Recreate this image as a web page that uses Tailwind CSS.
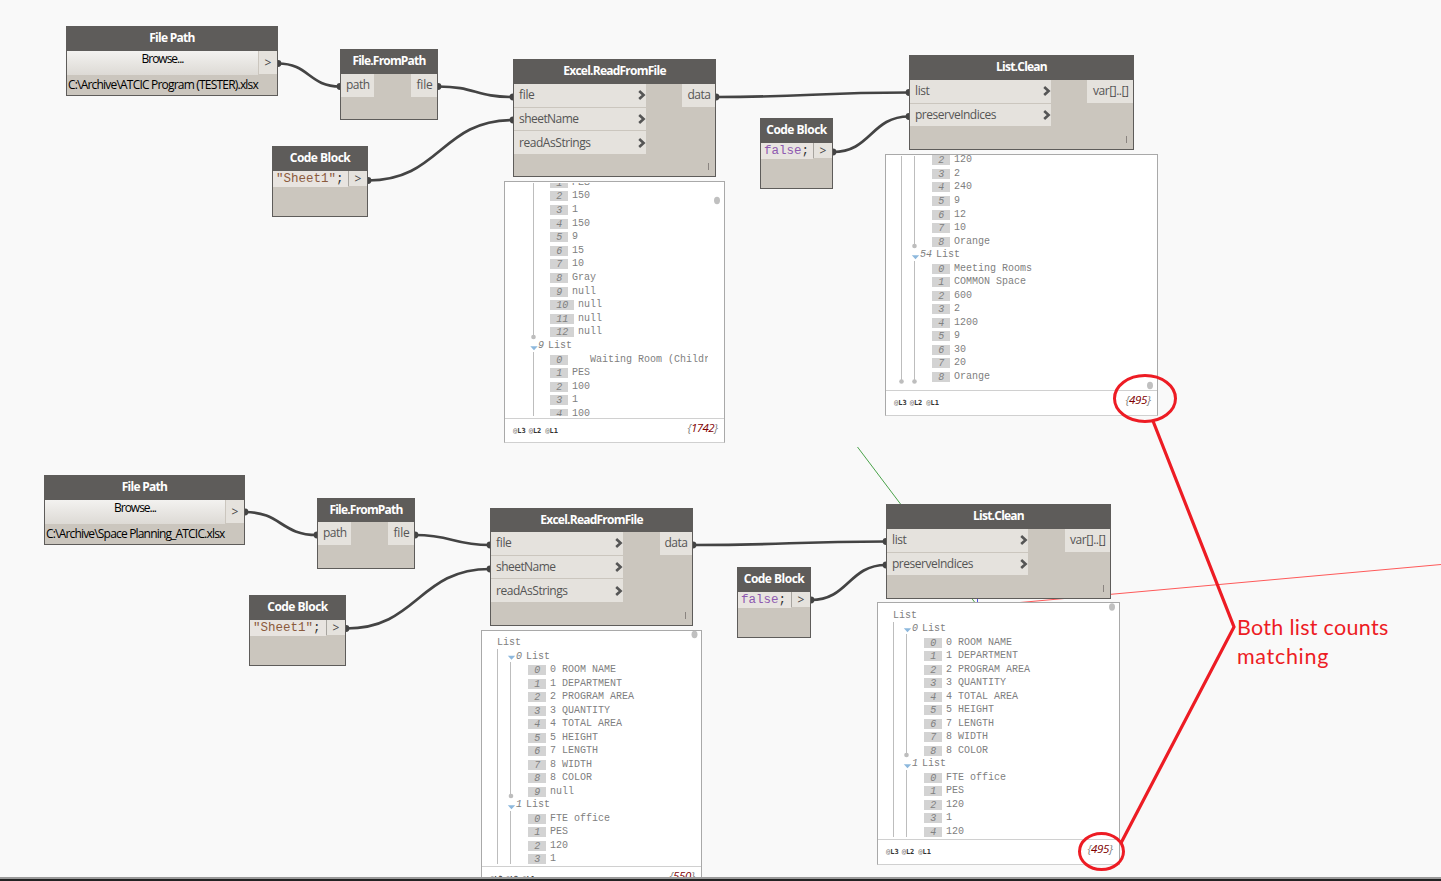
<!DOCTYPE html>
<html lang="en">
<head>
  <meta charset="UTF-8">
  <meta name="viewport" content="width=device-width, initial-scale=1.0">
  <title>Graph Workspace</title>
  <script src="https://cdn.jsdelivr.net/npm/@tailwindcss/browser@4"></script>
</head>
<body class="bg-[#f9f9f9] overflow-hidden font-['Open_Sans',sans-serif]">
  <main id="canvas" class="relative w-[1441px] h-[881px] overflow-hidden">
    <!-- Axes and wires, under the nodes -->
    <svg class="absolute inset-0" width="1441" height="881" fill="none">
      <path d="M857.5 447L974.5 602" stroke="#4aa34a" stroke-width="1" />
      <path d="M977.5 598V602" stroke="#5050e0" stroke-width="1" />
      <path d="M1020 602.5L1441 564.5" stroke="#ff5a5a" stroke-width="1" />
      <g id="wires" stroke="#444444" stroke-width="2.7"></g>
    </svg>

    <div id="nodes"></div>
    <div id="panels"></div>

    <!-- Red markup -->
    <svg class="absolute inset-0" width="1441" height="881" fill="none" stroke="#ed1c24" stroke-width="3">
      <ellipse cx="1145" cy="398.5" rx="30.5" ry="23" />
      <ellipse cx="1101.5" cy="851.5" rx="22" ry="18" />
      <path d="M1153 421L1234 627L1121 843" stroke-width="3.2" />
    </svg>
    <div class="absolute left-[1237px] top-[613px] font-[Lato,sans-serif] text-[21.5px] leading-[29px] text-[#ed1c24]">
      <div><span data-fit="151.5">Both list counts</span></div>
      <div><span data-fit="92">matching</span></div>
    </div>

    <div class="absolute inset-x-0 bottom-0 h-1 bg-[#222222] border-t-2 border-[#9a9a9a]"></div>
  </main>

  <script>
    // [x1, y1, x2, y2]
    const wires = [
      [278, 63.5, 340, 86.5], [438, 86.5, 513, 97], [368, 180.5, 513, 120],
      [716, 97, 909, 92.5], [833, 152, 909, 116.5],
      [245, 512, 317, 535], [415, 535, 490, 545], [346, 628.5, 490, 569],
      [693, 545, 886, 541.5], [811, 600, 886, 565],
    ];

    // Labels are [text, width]
    const readPorts = [["file", 15.5], ["sheetName", 59.5], ["readAsStrings", 71.5]];
    const cleanPorts = [["list", 14.5], ["preserveIndices", 81]];
    const nodes = [
      { type: "path", x: 66, y: 26, w: 212, h: 70, head: 25, title: ["File Path", 45.5], file: ["C:\\Archive\\ATCIC Program (TESTER).xlsx", 190] },
      { type: "ports", x: 340, y: 49, w: 98, h: 71, head: 25, title: ["File.FromPath", 73], ins: [["path", 23.5]], inW: 34, out: ["file", 16], outW: 26 },
      { type: "code", x: 272, y: 146, w: 96, h: 71, head: 25, title: ["Code Block", 60.5], code: '<span class="text-[#8b5a3c]">"Sheet1"</span>;' },
      { type: "ports", x: 513, y: 59, w: 203, h: 118, head: 25, title: ["Excel.ReadFromFile", 102.5], ins: readPorts, inW: 133, out: ["data", 23], outW: 33, arrows: true },
      { type: "code", x: 760, y: 118, w: 73, h: 71, head: 25, title: ["Code Block", 60.5], code: '<span class="text-[#8e5ab0]">false</span>;' },
      { type: "ports", x: 909, y: 55, w: 225, h: 95, head: 25, title: ["List.Clean", 51], ins: cleanPorts, inW: 142, out: ["var[]..[]", 35.5], outW: 46, arrows: true },
      { type: "path", x: 44, y: 475, w: 201, h: 70, head: 25, title: ["File Path", 45.5], file: ["C:\\Archive\\Space Planning_ATCIC.xlsx", 178.5] },
      { type: "ports", x: 317, y: 498, w: 98, h: 71, head: 24, title: ["File.FromPath", 73], ins: [["path", 23.5]], inW: 34, out: ["file", 16], outW: 26 },
      { type: "code", x: 249, y: 595, w: 97, h: 71, head: 25, title: ["Code Block", 60.5], code: '<span class="text-[#8b5a3c]">"Sheet1"</span>;' },
      { type: "ports", x: 490, y: 508, w: 203, h: 118, head: 24, title: ["Excel.ReadFromFile", 102.5], ins: readPorts, inW: 133, out: ["data", 23], outW: 32, arrows: true },
      { type: "code", x: 737, y: 567, w: 74, h: 71, head: 25, title: ["Code Block", 60.5], code: '<span class="text-[#8e5ab0]">false</span>;' },
      { type: "ports", x: 886, y: 504, w: 225, h: 95, head: 25, title: ["List.Clean", 51], ins: cleanPorts, inW: 142, out: ["var[]..[]", 35.5], outW: 45, arrows: true },
    ];

    // Rows: "index|value" is an item, "index>" a nested list, ">" the root list
    const header = ["0|0 ROOM NAME", "1|1 DEPARTMENT", "2|2 PROGRAM AREA", "3|3 QUANTITY", "4|4 TOTAL AREA", "5|5 HEIGHT", "6|7 LENGTH", "7|8 WIDTH", "8|8 COLOR"];
    const panels = [
      { x: 504, y: 181, w: 221, h: 262, foot: 418, clipTop: 183, clipRight: 708, first: 182.8, pitch: 13.6, item: 550, list: 538, count: ["1742", 30], thumb: [717, 200.5],
        lines: [[533.5, 183, 336]], dots: [[533.5, 337]], arrows: [[534, 348]], tail: [[533.5, 352, 416]],
        rows: ["1|PES", "2|150", "3|1", "4|150", "5|9", "6|15", "7|10", "8|Gray", "9|null", "10|null", "11|null", "12|null", "9>", "0|   Waiting Room (Childr", "1|PES", "2|100", "3|1", "4|100"] },
      { x: 885, y: 154, w: 273, h: 262, foot: 390, clipTop: 155, clipRight: 1157, first: 160.4, pitch: 13.54, item: 932, list: 920, count: ["495", 25], thumb: [1150, 385.5],
        lines: [[901.5, 156, 380], [914.5, 156, 245]], dots: [[901.5, 381.5], [914.5, 246], [914.5, 381.5]], arrows: [[915.5, 257]], tail: [[914.5, 261, 380]],
        rows: ["2|120", "3|2", "4|240", "5|9", "6|12", "7|10", "8|Orange", "54>", "0|Meeting Rooms", "1|COMMON Space", "2|600", "3|2", "4|1200", "5|9", "6|30", "7|20", "8|Orange"] },
      { x: 481, y: 630, w: 221, h: 262, foot: 866, clipTop: 631, clipRight: 701, first: 643, pitch: 13.5, item: 528, list: 516, root: 497, count: ["550", 25], thumb: [694.5, 634.5],
        lines: [[497.5, 649, 864], [510.5, 662, 795]], dots: [[511, 796]], arrows: [[511.5, 657.5], [511.5, 807]], tail: [[510.5, 811, 864]],
        rows: [">", "0>", ...header, "9|null", "1>", "0|FTE office", "1|PES", "2|120", "3|1"] },
      { x: 877, y: 602, w: 243, h: 263, foot: 839, clipTop: 603, clipRight: 1119, first: 615.6, pitch: 13.5, item: 924, list: 912, root: 893, count: ["495", 25], thumb: [1112, 607],
        lines: [[893.5, 622, 837], [906.5, 634, 754]], dots: [[906.5, 755]], arrows: [[907.5, 630], [907.5, 766]], tail: [[906.5, 770, 837]],
        rows: [">", "0>", ...header, "1>", "0|FTE office", "1|PES", "2|120", "3|1", "4|120"] },
    ];

    const label = ([text, width]) => `<span class="whitespace-pre" data-fit="${width}">${text}</span>`;
    const chevron = `<svg width="8" height="10" viewBox="0 0 8 10" fill="none" stroke="#555555" stroke-width="2.6"><path d="M1.2 1L5.6 5L1.2 9" /></svg>`;
    const outPort = `<div class="w-[18px] shrink-0 flex items-center justify-center bg-[#e5e2dd] text-[12px] text-[#444444]">&gt;</div>`;

    const bodies = {
      path: n => `
        <div class="flex h-6">
          <div class="flex-1 flex justify-center bg-linear-to-b from-[#f3f2f0] to-[#dddad5] text-[12px] leading-4 text-black">${label(["Browse...", 42])}</div>
          <div class="flex h-[23px] border-l border-[#cbc6be]">${outPort}</div>
        </div>
        <div class="text-[12px] leading-5 pl-px text-black">${label(n.file)}</div>`,
      code: n => `
        <div class="flex h-4 text-[12.5px] text-[#333333]">
          <div class="flex-1 bg-[#e8e4e0] pl-[3px] leading-[17px] font-['Liberation_Mono',monospace] whitespace-pre">${n.code}</div>
          <div class="flex h-[15px] border-l border-[#a8a5a0]">${outPort}</div>
        </div>`,
      ports: n => `
        <div class="flex justify-between items-start text-[12px] text-[#555555]">
          <div class="flex flex-col gap-px" style="width:${n.inW - 1}px">
            ${n.ins.map(p => `<div class="h-[22.7px] flex items-center justify-between bg-[#e5e2dd] pl-[5px] leading-4">${label(p)}${n.arrows ? chevron : ""}</div>`).join("")}
          </div>
          <div class="h-[22.5px] flex items-center justify-end bg-[#e5e2dd] pr-[4.5px]" style="width:${n.outW}px">${label(n.out)}</div>
        </div>
        ${n.arrows ? `<div class="absolute right-[6px] bottom-[6px] w-px h-[7px] bg-[#8a8480]"></div>` : ""}`,
    };

    document.getElementById("wires").innerHTML = wires.map(([x1, y1, x2, y2]) => {
      const mid = (x1 + x2) / 2;
      return `<path d="M${x1} ${y1}C${mid} ${y1} ${mid} ${y2} ${x2} ${y2}" />
        <circle cx="${x1}" cy="${y1}" r="3.4" fill="#444444" stroke="none" />
        <circle cx="${x2}" cy="${y2}" r="3.4" fill="#444444" stroke="none" />`;
    }).join("");

    document.getElementById("nodes").innerHTML = nodes.map(n => `
      <section class="absolute bg-[#cbc6be] border border-[#5e5c5a]" style="left:${n.x}px;top:${n.y}px;width:${n.w}px;height:${n.h}px">
        <h2 class="flex items-center justify-center pb-[2px] bg-[#5e5c5a] text-white text-[12px] font-bold" style="height:${n.head - 1}px">${label(n.title)}</h2>
        ${bodies[n.type](n)}
      </section>`).join("");

    function row(p, text) {
      const left = p.x + 1;
      if (text === ">") return `<div class="flex items-center" style="height:${p.pitch}px;padding-left:${p.root - left}px">List</div>`;
      if (text.endsWith(">")) {
        return `<div class="flex items-center gap-1" style="height:${p.pitch}px;padding-left:${p.list - left}px"><i>${text.slice(0, -1)}</i><span>List</span></div>`;
      }
      const [index, value] = text.split("|");
      return `<div class="flex items-center gap-[3.5px] whitespace-pre" style="height:${p.pitch}px;padding-left:${p.item - left}px">
        <i class="h-[10px] px-[6.2px] bg-[#d3d3d3] leading-[11px]">${index}</i><span>${value}</span></div>`;
    }

    document.getElementById("panels").innerHTML = panels.map(p => `
      <section class="absolute flex flex-col bg-white border border-[#a9a9a9] border-b-[#d0d0d0]" style="left:${p.x}px;top:${p.y}px;width:${p.w}px;height:${p.h}px">
        <div style="height:${p.foot - p.y - 1}px">
          <div class="overflow-hidden text-[10px] leading-3 text-[#808080] font-['Liberation_Mono',monospace]" style="margin-top:${p.clipTop - p.y - 1}px;height:${p.foot - 2 - p.clipTop}px;width:${p.clipRight - p.x - 1}px">
            <div style="margin-top:${p.first - p.pitch / 2 - p.clipTop}px">${p.rows.map(r => row(p, r)).join("")}</div>
          </div>
        </div>
        <footer class="flex-1 flex justify-between items-start border-t border-[#d0d0d0] pl-2 pr-[6.5px]">
          <div class="flex gap-[3px] pt-[7px] text-[7px] leading-[10px] font-['DejaVu_Sans_Mono',monospace] text-[#777777]">
            <span>@<b class="text-[#333333]">L3</b></span><span>@<b class="text-[#333333]">L2</b></span><span class="pl-px">@<b class="text-[#333333]">L1</b></span>
          </div>
          <div class="text-[11.5px] leading-[17px] italic text-[#808080]"><span data-fit="${p.count[1]}">{<span class="text-[#800000]">${p.count[0]}</span>}</span></div>
        </footer>
        <svg class="absolute -left-px -top-px" width="${p.w}" height="${p.h}" viewBox="${p.x} ${p.y} ${p.w} ${p.h}">
          ${[...p.lines, ...p.tail].map(([x, a, b]) => `<path d="M${x} ${a}V${b}" stroke="#bdbdbd" />`).join("")}
          ${p.dots.map(([x, y]) => `<circle cx="${x}" cy="${y}" r="2.3" fill="#bdbdbd" />`).join("")}
          ${p.arrows.map(([x, y]) => `<path d="M${x - 3.7} ${y - 1.8}h7.4l-3.7 4z" fill="#8db8dd" />`).join("")}
          <ellipse cx="${p.thumb[0]}" cy="${p.thumb[1]}" rx="3" ry="3.7" fill="#c0c0c0" />
        </svg>
      </section>`).join("");

    // Spread each label over its width
    function fitLabels() {
      document.querySelectorAll("[data-fit]").forEach(el => {
        el.style.letterSpacing = "0px";
        const gap = (el.dataset.fit - el.getBoundingClientRect().width) / el.textContent.length;
        el.style.letterSpacing = `${gap}px`;
      });
    }
    window.addEventListener("load", () => requestAnimationFrame(fitLabels));
  </script>
</body>
</html>
